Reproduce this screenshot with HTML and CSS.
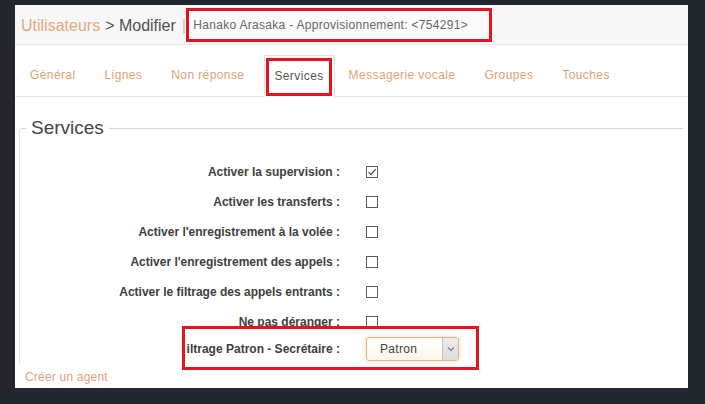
FILE: index.html
```html
<!DOCTYPE html>
<html lang="fr">
<head>
<meta charset="utf-8">
<title>Utilisateurs - Modifier</title>
<link rel="stylesheet" href="styles.css">
</head>
<body>
<div class="panel">
  <div class="hdr">
    <span class="crumb">Utilisateurs</span>
    <span class="cur">&gt; Modifier</span>
    <span class="sep">|</span>
    <span class="info">Hanako Arasaka - Approvisionnement: &lt;754291&gt;</span>
  </div>
  <div class="tabs">
    <span class="tab">Général</span>
    <span class="tab">Lignes</span>
    <span class="tab">Non réponse</span>
    <span class="tab active">Services</span>
    <span class="tab">Messagerie vocale</span>
    <span class="tab">Groupes</span>
    <span class="tab">Touches</span>
  </div>
  <fieldset class="fs">
    <legend class="lg">Services</legend>
    <div class="rows">
      <div class="row"><span class="lbl">Activer la supervision :</span><span class="cb checked"><svg viewBox="0 0 12 12" width="12" height="12"><path d="M2.6 6.2 L5 8.6 L9.6 3.2" fill="none" stroke="#4a4a4a" stroke-width="1.2"/></svg></span></div>
      <div class="row"><span class="lbl">Activer les transferts :</span><span class="cb"></span></div>
      <div class="row"><span class="lbl">Activer l'enregistrement à la volée :</span><span class="cb"></span></div>
      <div class="row"><span class="lbl">Activer l'enregistrement des appels :</span><span class="cb"></span></div>
      <div class="row"><span class="lbl">Activer le filtrage des appels entrants :</span><span class="cb"></span></div>
      <div class="row"><span class="lbl">Ne pas déranger :</span><span class="cb"></span></div>
      <div class="row row-sel"><span class="lbl">iltrage Patron - Secrétaire :</span>
        <span class="sel"><span class="sel-val">Patron</span><span class="sel-btn"><svg viewBox="0 0 8 6" width="8" height="6"><path d="M1 1.5 L4 4.5 L7 1.5" fill="none" stroke="#777" stroke-width="1.1"/></svg></span></span>
      </div>
    </div>
  </fieldset>
  <div class="foot"><span class="link">Créer un agent</span></div>
</div>
</body>
</html>
```
FILE: styles.css
```css
html, body {
  margin: 0;
  padding: 0;
}
body {
  background: #22262d;
  height: 404px;
  overflow: hidden;
  font-family: "Liberation Sans", Arial, sans-serif;
}
.panel {
  margin: 5px 17px 0 15px;
  height: 383px;
  background: #fff;
  overflow: hidden;
}
.hdr {
  height: 39px;
  background: #f7f7f7;
  border-bottom: 1px solid #e6e6e6;
  display: flex;
  align-items: center;
  padding-left: 6px;
  font-size: 16px;
}
.crumb {
  color: #e4a882;
  padding-top: 2px;
}
.cur {
  color: #505050;
  margin-left: 5px;
  padding-top: 2px;
}
.sep {
  color: #d9c2b4;
  margin-left: 6px;
  font-size: 17px;
  padding-top: 2px;
}
.info {
  margin-left: 0;
  height: 34px;
  width: 306px;
  box-sizing: border-box;
  border: 3px solid #e3141f;
  display: flex;
  align-items: center;
  padding-left: 4px;
  font-size: 12px;
  letter-spacing: 0.3px;
  color: #666;
  background: #fafafa;
}
.tabs {
  height: 51px;
  display: flex;
  align-items: flex-end;
  border-bottom: 1px solid #e6e6e6;
  padding-left: 6px;
  gap: 11px;
}
.tab {
  height: 41px;
  line-height: 41px;
  padding: 0 9px;
  font-size: 12px;
  color: #e39f72;
  letter-spacing: 0.4px;
}
.tab.active {
  position: relative;
  border: 1px solid #e2e2e2;
  border-bottom: none;
  background: #fff;
  margin-bottom: -1px;
  margin-right: -6px;
  padding: 0 10px 0 9px;
  color: #555;
}
.tab.active::after {
  content: "";
  position: absolute;
  left: 1px;
  right: 2px;
  top: 2px;
  bottom: 1px;
  border: 3px solid #e3141f;
}
.fs {
  margin: 20px 5px 0 4px;
  padding: 0;
  border: none;
  border-top: 1px solid #d6d6d6;
  border-left: 1px solid #e4e4e4;
  border-top-left-radius: 4px;
  min-width: 0;
}
.lg {
  margin-left: 6px;
  padding: 0 5px;
  font-size: 19px;
  line-height: 22px;
  color: #444;
}
.rows {
  padding-top: 18px;
}
.row {
  display: flex;
  align-items: center;
  height: 30px;
}
.lbl {
  width: 320px;
  text-align: right;
  font-size: 12px;
  font-weight: bold;
  color: #3e3e3e;
  white-space: nowrap;
}
.cb {
  margin-left: 26px;
  width: 12px;
  height: 12px;
  box-sizing: border-box;
  border: 1px solid #5a5a5a;
  background: #fff;
  display: flex;
  align-items: center;
  justify-content: center;
}
.cb svg {
  display: block;
  flex: none;
}
.row-sel {
  position: relative;
  margin-top: -3px;
}
.row-sel::after {
  content: "";
  position: absolute;
  left: 162px;
  top: -8px;
  width: 297px;
  height: 44px;
  box-sizing: border-box;
  border: 3px solid #e3141f;
}
.sel {
  margin-left: 26px;
  width: 93px;
  height: 24px;
  box-sizing: border-box;
  border: 1px solid #e4b38a;
  border-radius: 3px;
  box-shadow: 0 0 4px rgba(240, 170, 100, 0.55);
  background: linear-gradient(#ffffff, #fdf5ea);
  display: flex;
  align-items: stretch;
}
.sel-val {
  flex: 1;
  display: flex;
  align-items: center;
  padding-left: 13px;
  font-size: 12px;
  letter-spacing: 0.3px;
  color: #444;
}
.sel-btn {
  width: 15px;
  background: linear-gradient(#ececec, #dcdcdc);
  border-left: 1px solid #c4c4c4;
  border-radius: 0 2px 2px 0;
  display: flex;
  align-items: center;
  justify-content: center;
}
.foot {
  padding-left: 10px;
  margin-top: 3px;
}
.link {
  font-size: 12px;
  line-height: 14px;
  color: #e0a07a;
  letter-spacing: 0.2px;
}
```
